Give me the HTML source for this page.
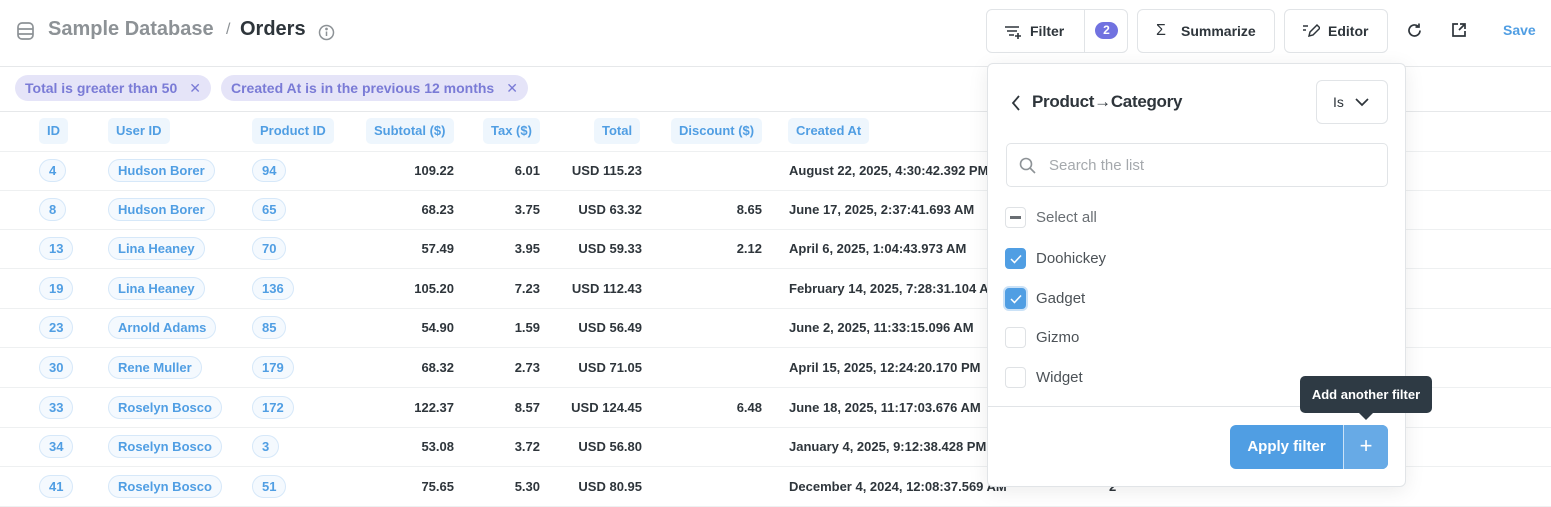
<!DOCTYPE html>
<html><head><meta charset="utf-8"><style>
*{box-sizing:border-box;margin:0;padding:0}
body{width:1551px;height:507px;overflow:hidden;background:#fff;font-family:"Liberation Sans",sans-serif;color:#2e353b;position:relative}
.a{position:absolute}
.top{height:67px;border-bottom:1px solid #e6e8ea;width:1551px;top:0;left:0}
.chips{top:67px;height:45px;width:1551px;border-bottom:1px solid #e6e8ea;left:0}
.chip{position:absolute;top:8px;height:26px;border-radius:13px;background:#e5e4f8;font-size:14px;font-weight:bold;line-height:26px;padding:0 10px;color:#7a7bd6}
.chip span{margin-left:12px;font-weight:normal;color:#7a7bd6}
.btn{position:absolute;top:9px;height:44px;border:1px solid #e1e4e7;border-radius:6px;font-size:14px;font-weight:bold;line-height:42px;color:#2e353b}
.hp{position:absolute;top:118px;height:26px;line-height:26px;background:#eef6fd;border-radius:5px;color:#509ee3;font-size:13px;font-weight:bold;padding:0 8px}
.row{position:absolute;left:0;width:1551px;height:40px;border-bottom:1px solid #eef0f1;font-size:13px;font-weight:bold}
.p{position:absolute;top:8px;height:23px;line-height:21px;border:1px solid #d6e8f9;background:#f4f9fe;border-radius:12px;color:#509ee3;padding:0 9px}
.n{position:absolute;top:0;line-height:39px;text-align:right;left:0}
.c{position:absolute;top:0;line-height:39px;left:789px;white-space:nowrap}
.pop{left:987px;top:63px;width:419px;height:424px;border:1px solid #e1e4e7;border-radius:6px;background:#fff;box-shadow:0 4px 20px rgba(0,0,0,.08)}
.cb{position:absolute;left:17px;width:21px;height:21px;border:1px solid #dfe2e5;border-radius:4px;background:#fff}
.cb.on{background:#509ee3;border-color:#509ee3}
.lbl{position:absolute;left:48px;font-size:15px;color:#4c5257}
</style></head><body>
<div class="a top"></div>
<svg class="a" style="left:16px;top:21px" width="19" height="20" viewBox="0 0 19 20" fill="none" stroke="#8d9296" stroke-width="1.7"><rect x="2" y="2" width="15" height="16" rx="4"/><path d="M2 8h15M2 13h15"/></svg>
<div class="a" style="left:48px;top:18px;font-size:20px;color:#8d9296;font-weight:bold">Sample Database</div>
<div class="a" style="left:226px;top:21px;font-size:16px;color:#8d9296">/</div>
<div class="a" style="left:240px;top:18px;font-size:20px;font-weight:bold;color:#2e353b">Orders</div>
<svg class="a" style="left:318px;top:24px" width="17" height="17" viewBox="0 0 17 17" fill="none" stroke="#8d9296" stroke-width="1.5"><circle cx="8.5" cy="8.5" r="7"/><path d="M8.5 7.5v4.5"/><circle cx="8.5" cy="5" r=".6" fill="#8d9296"/></svg>

<div class="btn" style="left:986px;width:142px">
 <svg class="a" style="left:17px;top:14px" width="18" height="16" viewBox="0 0 18 16" fill="none" stroke="#2e353b" stroke-width="1.6"><path d="M1 3h14M3 7h10M5 11h5M14 9v6M11 12h6"/></svg>
 <span class="a" style="left:43px">Filter</span>
 <div class="a" style="left:97px;top:0;height:42px;border-left:1px solid #e1e4e7"></div>
 <div class="a" style="left:108px;top:12px;width:23px;height:17px;border-radius:9px;background:#7172e0;color:#fff;font-size:12px;line-height:17px;text-align:center">2</div>
</div>
<div class="btn" style="left:1137px;width:138px"><span class="a" style="left:18px;font-size:16px;font-weight:normal">Σ</span><span class="a" style="left:43px">Summarize</span></div>
<div class="btn" style="left:1284px;width:104px">
 <svg class="a" style="left:17px;top:13px" width="18" height="16" viewBox="0 0 18 16" fill="none" stroke="#2e353b" stroke-width="1.5"><path d="M1 3h5M1 7h3M7 13l1-4 7-7 3 3-7 7z"/></svg>
 <span class="a" style="left:43px">Editor</span></div>
<svg class="a" style="left:1406px;top:22px" width="17" height="17" viewBox="0 0 17 17" fill="none" stroke="#2e353b" stroke-width="1.7"><path d="M14 8.5a5.5 5.5 0 1 1-2-4.3"/><path d="M13 1.5v3.5h-3.5"/></svg>
<svg class="a" style="left:1451px;top:22px" width="16" height="16" viewBox="0 0 16 16" fill="none" stroke="#2e353b" stroke-width="1.7"><path d="M7 2H2v12h12V9M9 2h5v5M14 2L8 8"/></svg>
<div class="a" style="left:1503px;top:22px;font-size:14px;font-weight:bold;color:#509ee3">Save</div>

<div class="a chips">
<div class="chip" style="left:15px">Total is greater than 50<span>✕</span></div>
<div class="chip" style="left:221px">Created At is in the previous 12 months<span>✕</span></div>
</div>

<div class="hp" style="left:39px">ID</div>
<div class="hp" style="left:108px">User ID</div>
<div class="hp" style="left:252px">Product ID</div>
<div class="hp" style="left:366px">Subtotal ($)</div>
<div class="hp" style="left:483px">Tax ($)</div>
<div class="hp" style="left:594px">Total</div>
<div class="hp" style="left:671px">Discount ($)</div>
<div class="hp" style="left:788px">Created At</div>
<div class="a" style="left:0;top:151px;width:1551px;border-top:1px solid #eef0f1"></div>

<div class="row" style="top:151px"><div class="p" style="left:39px">4</div><div class="p" style="left:108px">Hudson Borer</div><div class="p" style="left:252px">94</div><div class="n" style="width:454px">109.22</div><div class="n" style="width:540px">6.01</div><div class="n" style="width:642px">USD 115.23</div><div class="c">August 22, 2025, 4:30:42.392 PM</div></div>
<div class="row" style="top:190px"><div class="p" style="left:39px">8</div><div class="p" style="left:108px">Hudson Borer</div><div class="p" style="left:252px">65</div><div class="n" style="width:454px">68.23</div><div class="n" style="width:540px">3.75</div><div class="n" style="width:642px">USD 63.32</div><div class="n" style="width:762px">8.65</div><div class="c">June 17, 2025, 2:37:41.693 AM</div></div>
<div class="row" style="top:229px"><div class="p" style="left:39px">13</div><div class="p" style="left:108px">Lina Heaney</div><div class="p" style="left:252px">70</div><div class="n" style="width:454px">57.49</div><div class="n" style="width:540px">3.95</div><div class="n" style="width:642px">USD 59.33</div><div class="n" style="width:762px">2.12</div><div class="c">April 6, 2025, 1:04:43.973 AM</div></div>
<div class="row" style="top:269px"><div class="p" style="left:39px">19</div><div class="p" style="left:108px">Lina Heaney</div><div class="p" style="left:252px">136</div><div class="n" style="width:454px">105.20</div><div class="n" style="width:540px">7.23</div><div class="n" style="width:642px">USD 112.43</div><div class="c">February 14, 2025, 7:28:31.104 AM</div></div>
<div class="row" style="top:308px"><div class="p" style="left:39px">23</div><div class="p" style="left:108px">Arnold Adams</div><div class="p" style="left:252px">85</div><div class="n" style="width:454px">54.90</div><div class="n" style="width:540px">1.59</div><div class="n" style="width:642px">USD 56.49</div><div class="c">June 2, 2025, 11:33:15.096 AM</div></div>
<div class="row" style="top:348px"><div class="p" style="left:39px">30</div><div class="p" style="left:108px">Rene Muller</div><div class="p" style="left:252px">179</div><div class="n" style="width:454px">68.32</div><div class="n" style="width:540px">2.73</div><div class="n" style="width:642px">USD 71.05</div><div class="c">April 15, 2025, 12:24:20.170 PM</div></div>
<div class="row" style="top:388px"><div class="p" style="left:39px">33</div><div class="p" style="left:108px">Roselyn Bosco</div><div class="p" style="left:252px">172</div><div class="n" style="width:454px">122.37</div><div class="n" style="width:540px">8.57</div><div class="n" style="width:642px">USD 124.45</div><div class="n" style="width:762px">6.48</div><div class="c">June 18, 2025, 11:17:03.676 AM</div></div>
<div class="row" style="top:427px"><div class="p" style="left:39px">34</div><div class="p" style="left:108px">Roselyn Bosco</div><div class="p" style="left:252px">3</div><div class="n" style="width:454px">53.08</div><div class="n" style="width:540px">3.72</div><div class="n" style="width:642px">USD 56.80</div><div class="c">January 4, 2025, 9:12:38.428 PM</div></div>
<div class="row" style="top:467px"><div class="p" style="left:39px">41</div><div class="p" style="left:108px">Roselyn Bosco</div><div class="p" style="left:252px">51</div><div class="n" style="width:454px">75.65</div><div class="n" style="width:540px">5.30</div><div class="n" style="width:642px">USD 80.95</div><div class="c">December 4, 2024, 12:08:37.569 AM</div><div class="c" style="left:1109px">2</div></div>

<div class="a pop">
 <svg class="a" style="left:22px;top:30px" width="12" height="18" viewBox="0 0 12 18" fill="none" stroke="#2e353b" stroke-width="1.8"><path d="M9 2L3 9l6 7"/></svg>
 <div class="a" style="left:44px;top:28px;font-size:17px;font-weight:bold;color:#2e353b;letter-spacing:-0.3px">Product<span style="font-weight:normal">→</span>Category</div>
 <div class="a" style="left:328px;top:16px;width:72px;height:44px;border:1px solid #e1e4e7;border-radius:6px;font-size:14px;line-height:42px;padding-left:16px">Is
  <svg class="a" style="left:37px;top:16px" width="16" height="10" viewBox="0 0 16 10" fill="none" stroke="#2e353b" stroke-width="1.7"><path d="M2 2l6 6 6-6"/></svg></div>
 <div class="a" style="left:18px;top:79px;width:382px;height:44px;border:1px solid #e1e4e7;border-radius:5px">
  <svg class="a" style="left:12px;top:13px" width="17" height="17" viewBox="0 0 17 17" fill="none" stroke="#8d9296" stroke-width="1.6"><circle cx="7" cy="7" r="5.5"/><path d="M11 11l5 5"/></svg>
  <div class="a" style="left:42px;top:13px;font-size:15px;color:#a5a9ad">Search the list</div></div>
 <div class="cb" style="top:143px"><div class="a" style="left:4px;top:8px;width:11px;height:3px;background:#696e73"></div></div><div class="lbl" style="top:145px;color:#696e73">Select all</div>
 <div class="cb on" style="top:184px"><svg class="a" style="left:4px;top:5px" width="12" height="10" viewBox="0 0 12 10" fill="none" stroke="#fff" stroke-width="1.5"><path d="M1 5l3.5 3.5L11 1.5"/></svg></div><div class="lbl" style="top:186px">Doohickey</div>
 <div class="cb on" style="top:224px;box-shadow:0 0 0 2px #cbe2f7"><svg class="a" style="left:4px;top:5px" width="12" height="10" viewBox="0 0 12 10" fill="none" stroke="#fff" stroke-width="1.5"><path d="M1 5l3.5 3.5L11 1.5"/></svg></div><div class="lbl" style="top:226px">Gadget</div>
 <div class="cb" style="top:263px"></div><div class="lbl" style="top:265px">Gizmo</div>
 <div class="cb" style="top:303px"></div><div class="lbl" style="top:305px">Widget</div>
 <div class="a" style="left:0;top:342px;width:417px;border-top:1px solid #e1e4e7"></div>
 <div class="a" style="left:242px;top:361px;width:158px;height:44px;border-radius:6px;background:#509ee3;overflow:hidden">
  <div class="a" style="left:0;top:0;width:113px;height:44px;line-height:44px;text-align:center;color:#fff;font-weight:bold;font-size:15px">Apply filter</div>
  <div class="a" style="left:113px;top:0;width:1px;height:44px;background:#fff;opacity:.7"></div>
  <div class="a" style="left:114px;top:0;width:44px;height:44px;background:#67aae6;color:#fff;font-size:22px;text-align:center;line-height:42px">+</div></div>
</div>
<div class="a" style="left:1300px;top:376px;width:132px;height:37px;background:#2e3a44;border-radius:5px;color:#fff;font-size:13px;font-weight:bold;line-height:37px;text-align:center">Add another filter</div>
<div class="a" style="left:1359px;top:413px;width:0;height:0;border-left:7px solid transparent;border-right:7px solid transparent;border-top:7px solid #2e3a44"></div>
</body></html>
